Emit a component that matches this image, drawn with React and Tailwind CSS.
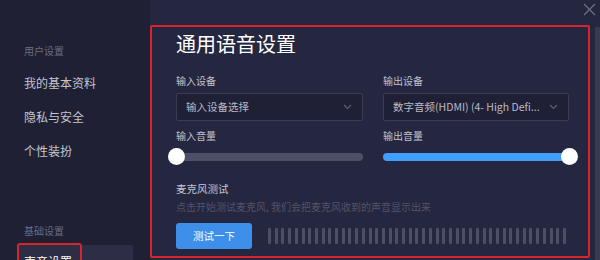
import React from "react";

const font = { fontFamily: '"Noto Sans CJK SC", "Noto Sans", sans-serif' };

const Chevron = () => (
  <svg width="9" height="6" viewBox="0 0 9 6" fill="none" stroke="#5d5f75" strokeWidth="1.2">
    <path d="M1 1l3.5 3.5L8 1" />
  </svg>
);

const Select = ({ value }) => (
  <div className="h-[28px] flex items-center justify-between pl-[9px] pr-[10px] bg-[#1f2036] border border-[#3a3c56] rounded-[2px]">
    <span className="text-[10.5px] text-[#b9bac6] whitespace-nowrap overflow-hidden">{value}</span>
    <Chevron />
  </div>
);

const Slider = ({ value }) => (
  <div className="relative h-[17px] flex items-center">
    <div className="w-full h-[8px] rounded-full bg-[#4d4f66] overflow-hidden">
      <div className="h-full bg-[#409eff]" style={{ width: `${value}%` }} />
    </div>
    <div
      className="absolute w-[17px] h-[17px] rounded-full bg-white"
      style={{ left: `calc(${value}% - 8px)` }}
    />
  </div>
);

export default function App() {
  const bars = Array.from({ length: 45 });

  return (
    <div className="w-[600px] h-[260px] flex overflow-hidden relative" style={font}>
      {/* Sidebar */}
      <div className="w-[150px] shrink-0 bg-[#1f2033] pt-[43px] px-[17px] relative">
        <div className="px-[7px] text-[10px] leading-[16px] text-[#6b6d82]">用户设置</div>
        <div className="mt-[7px]">
          {["我的基本资料", "隐私与安全", "个性装扮"].map((t) => (
            <div key={t} className="px-[7px] h-[34px] leading-[34px] text-[12px] text-[#c4c5cf]">
              {t}
            </div>
          ))}
        </div>
        <div className="mt-[55px] px-[7px] text-[10px] leading-[16px] text-[#6b6d82]">基础设置</div>
        <div className="mt-[6px] px-[7px] h-[34px] leading-[34px] text-[12px] text-white bg-[#2d2e45] rounded-[2px]">
          声音设置
        </div>
        <div className="absolute left-[17px] top-[243px] w-[65px] h-[30px] border-2 border-[#d8252b] rounded-[3px]" />
      </div>

      {/* Main */}
      <div className="flex-1 bg-[#25263f] relative pt-[30px] pl-[26px]">
        <h1 className="text-[20px] leading-[28px] text-white">通用语音设置</h1>

        <div className="mt-[15px] grid grid-cols-[187px_186px] gap-x-[20px]">
          <div>
            <div className="text-[10px] leading-[16px] text-[#c2c3ce]">输入设备</div>
            <div className="mt-[4px]">
              <Select value="输入设备选择" />
            </div>
            <div className="mt-[7px] text-[10px] leading-[16px] text-[#c2c3ce]">输入音量</div>
            <div className="mt-[4px]">
              <Slider value={0} />
            </div>
          </div>
          <div>
            <div className="text-[10px] leading-[16px] text-[#c2c3ce]">输出设备</div>
            <div className="mt-[4px]">
              <Select value="数字音频(HDMI) (4- High Defi..." />
            </div>
            <div className="mt-[7px] text-[10px] leading-[16px] text-[#c2c3ce]">输出音量</div>
            <div className="mt-[4px]">
              <Slider value={100} />
            </div>
          </div>
        </div>

        <div className="mt-[16px] text-[10.5px] leading-[16px] text-[#c4c5cf]">麦克风测试</div>
        <div className="mt-[2px] text-[10px] leading-[16px] text-[#52546b]">
          点击开始测试麦克风, 我们会把麦克风收到的声音显示出来
        </div>
        <div className="mt-[8px] flex items-center">
          <button className="w-[76px] h-[26px] rounded-[3px] bg-[#3d8fe9] text-white text-[10.5px]">
            测试一下
          </button>
          <div className="ml-[16px] w-[298px] flex justify-between items-center">
            {bars.map((_, i) => (
              <div key={i} className="w-[3px] h-[16px] rounded-[1px] bg-[#4d4f67]" />
            ))}
          </div>
        </div>

        {/* close */}
        <svg className="absolute left-[433px] top-[3px]" width="13" height="13" viewBox="0 0 13 13" stroke="#6e7086" strokeWidth="1.2">
          <path d="M1 1l11 11M12 1L1 12" />
        </svg>

        {/* scrollbar */}
        <div className="absolute right-0 top-[27px] bottom-0 w-[5px] bg-[#383a50]" />

        {/* highlight box */}
        <div className="absolute left-0 top-[25px] w-[440px] h-[233px] border-2 border-[#d8252b] rounded-[2px] pointer-events-none" />
      </div>
    </div>
  );
}
